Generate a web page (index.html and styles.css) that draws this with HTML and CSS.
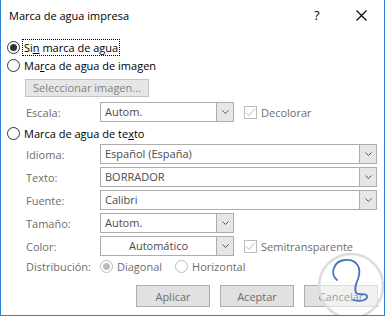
FILE: index.html
```
<!DOCTYPE html>
<html lang="es">
<head>
    <meta charset="UTF-8">
    <title>Marca de agua impresa</title>
    <link rel="stylesheet" href="styles.css">
</head>
<body>
    <div class="dialog">
        <div class="titlebar">
            <span class="title">Marca de agua impresa</span>
            <span class="help">?</span>
            <span class="close">
                <svg width="11" height="11" viewBox="0 0 11 11"><path d="M0.5 0.5 L10.5 10.5 M10.5 0.5 L0.5 10.5" stroke="#000" stroke-width="1.1" fill="none"/></svg>
            </span>
        </div>

        <div class="content">
            <div class="option-row">
                <span class="radio checked"></span>
                <span class="focus-box">Si<u>n</u> marca de agua</span>
            </div>
            <div class="option-row">
                <span class="radio"></span>
                <span class="option-text">Ma<u>r</u>ca de agua de imagen</span>
            </div>

            <div class="sub-button-row">
                <button class="btn btn-picture" disabled>Seleccionar imagen...</button>
            </div>

            <div class="field-row escala-row">
                <span class="label">Escala:</span>
                <div class="combo combo-short">
                    <span class="combo-value">Autom.</span>
                    <span class="combo-arrow"><svg width="7" height="4" viewBox="0 0 7 4"><path d="M0.5 0.5 L3.5 3.5 L6.5 0.5" stroke="#555" fill="none"/></svg></span>
                </div>
                <span class="check"><svg width="11" height="11" viewBox="0 0 11 11"><path d="M1 5.5 L4 8.5 L10 1.5" stroke="#bcbcbc" fill="none"/></svg></span>
                <span class="check-text">Decolorar</span>
            </div>

            <div class="option-row text-option">
                <span class="radio"></span>
                <span class="option-text">Marca de agua de te<u>x</u>to</span>
            </div>

            <div class="field-list">
                <div class="field-row">
                    <span class="label">Idioma:</span>
                    <div class="combo combo-long">
                        <span class="combo-value">Español (España)</span>
                        <span class="combo-arrow"><svg width="7" height="4" viewBox="0 0 7 4"><path d="M0.5 0.5 L3.5 3.5 L6.5 0.5" stroke="#555" fill="none"/></svg></span>
                    </div>
                </div>
                <div class="field-row">
                    <span class="label">Texto:</span>
                    <div class="combo combo-long">
                        <span class="combo-value">BORRADOR</span>
                        <span class="combo-arrow"><svg width="7" height="4" viewBox="0 0 7 4"><path d="M0.5 0.5 L3.5 3.5 L6.5 0.5" stroke="#555" fill="none"/></svg></span>
                    </div>
                </div>
                <div class="field-row">
                    <span class="label">Fuente:</span>
                    <div class="combo combo-long">
                        <span class="combo-value">Calibri</span>
                        <span class="combo-arrow"><svg width="7" height="4" viewBox="0 0 7 4"><path d="M0.5 0.5 L3.5 3.5 L6.5 0.5" stroke="#555" fill="none"/></svg></span>
                    </div>
                </div>
                <div class="field-row">
                    <span class="label">Tamaño:</span>
                    <div class="combo combo-short">
                        <span class="combo-value">Autom.</span>
                        <span class="combo-arrow"><svg width="7" height="4" viewBox="0 0 7 4"><path d="M0.5 0.5 L3.5 3.5 L6.5 0.5" stroke="#555" fill="none"/></svg></span>
                    </div>
                </div>
                <div class="field-row">
                    <span class="label">Color:</span>
                    <div class="combo combo-short">
                        <span class="combo-value centered">Automático</span>
                        <span class="combo-arrow"><svg width="7" height="4" viewBox="0 0 7 4"><path d="M0.5 0.5 L3.5 3.5 L6.5 0.5" stroke="#555" fill="none"/></svg></span>
                    </div>
                    <span class="check"><svg width="11" height="11" viewBox="0 0 11 11"><path d="M1 5.5 L4 8.5 L10 1.5" stroke="#bcbcbc" fill="none"/></svg></span>
                    <span class="check-text">Semitransparente</span>
                </div>
            </div>

            <div class="field-row layout-row">
                <span class="label">Distribución:</span>
                <span class="radio small-radio checked-grey"></span>
                <span class="grey-text">Diagonal</span>
                <span class="radio small-radio horizontal-radio"></span>
                <span class="grey-text">Horizontal</span>
            </div>
        </div>

        <div class="footer">
            <button class="btn btn-action disabled-text">Aplicar</button>
            <button class="btn btn-action disabled-text">Aceptar</button>
            <button class="btn btn-action">Cancelar</button>
        </div>

        <!-- site watermark over the corner -->
        <svg class="watermark" width="70" height="70" viewBox="0 0 70 70">
            <circle cx="34" cy="34" r="32" fill="rgba(255,255,255,0.55)" stroke="#dcdcdc" stroke-width="2.5"/>
            <path d="M20 28 C13 22 16 9 28 8 C40 7 45 16 41 27 C39 32 37 36 39 41 C42 44 49 40 50 44 C51 48 44 50 36 48" stroke="#4a75b9" stroke-width="1.8" fill="none" stroke-linecap="round"/>
        </svg>
    </div>
</body>
</html>
```

FILE: styles.css
```
* {
    box-sizing: border-box;
}

body {
    margin: 0;
    background-color: #ffffff;
    font-family: 'Open Sans', 'Noto Sans', sans-serif;
    font-size: 11px;
    color: #000000;
}

.dialog {
    position: relative;
    width: 385px;
    height: 316px;
    border: 1px solid #2b7fd4;
    border-top: none;
    background-color: #ffffff;
    overflow: hidden;
}

/* --- Title bar --- */
.titlebar {
    display: flex;
    align-items: center;
    height: 30px;
    padding-left: 8px;
}

.title {
    font-size: 11px;
    color: #000;
}

.help {
    margin-left: auto;
    font-size: 13px;
    width: 12px;
}

.close {
    display: flex;
    margin-left: 30px;
    margin-right: 17px;
}

/* --- Content --- */
.content {
    padding-top: 8px;
}

.option-row {
    display: flex;
    align-items: center;
    height: 18px;
    padding-left: 6px;
}

.radio {
    width: 13px;
    height: 13px;
    border: 1px solid #333333;
    border-radius: 50%;
    display: flex;
    align-items: center;
    justify-content: center;
    flex-shrink: 0;
}

.radio.checked::after {
    content: '';
    width: 7px;
    height: 7px;
    border-radius: 50%;
    background-color: #333333;
}

.option-row .option-text {
    margin-left: 4px;
}

.focus-box {
    margin-left: 2px;
    padding: 0 1px;
    border: 1px dotted #000;
    line-height: 15px;
}

.sub-button-row {
    padding-left: 24px;
    margin-top: 5px;
}

.btn {
    font-family: inherit;
    font-size: 11px;
    background-color: #e1e1e1;
    border: 1px solid #adadad;
    color: #1a1a1a;
    padding: 0;
}

.btn-picture {
    width: 124px;
    height: 18px;
    line-height: 14px;
    color: #838383;
    background-color: #e6e6e6;
    border-color: #c4c4c4;
}

.field-row {
    display: flex;
    align-items: center;
    height: 20px;
    padding-left: 25px;
}

.escala-row {
    margin-top: 5px;
}

.label {
    width: 74px;
    color: #6d6d6d;
}

.combo {
    display: flex;
    height: 20px;
    border: 1px solid #adadad;
    background-color: #ffffff;
}

.combo-short {
    width: 134px;
}

.combo-long {
    width: 277px;
}

.combo-value {
    flex: 1;
    padding-left: 4px;
    line-height: 18px;
    color: #4a4a4a;
}

.combo-value.centered {
    text-align: center;
    padding-left: 0;
}

.combo-arrow {
    width: 17px;
    border-left: 1px solid #adadad;
    background-color: #e6e6e6;
    display: flex;
    align-items: center;
    justify-content: center;
}

.check {
    width: 13px;
    height: 13px;
    border: 1px solid #bcbcbc;
    margin-left: 10px;
    display: flex;
    flex-shrink: 0;
}

.check-text {
    margin-left: 4px;
    color: #6d6d6d;
}

.text-option {
    margin-top: 2px;
}

.field-list {
    display: flex;
    flex-direction: column;
    gap: 3px;
    margin-top: 2px;
}

.layout-row {
    height: 18px;
    margin-top: 1px;
}

.small-radio {
    border-color: #bcbcbc;
}

.checked-grey::after {
    content: '';
    width: 7px;
    height: 7px;
    border-radius: 50%;
    background-color: #bcbcbc;
}

.grey-text {
    margin-left: 4px;
    color: #6d6d6d;
}

.horizontal-radio {
    margin-left: 13px;
}

/* --- Footer buttons --- */
.footer {
    display: flex;
    justify-content: flex-end;
    gap: 10px;
    padding-right: 6px;
    margin-top: 10px;
}

.btn-action {
    width: 74px;
    height: 22px;
}

.disabled-text {
    color: #6d6d6d;
}

.watermark {
    position: absolute;
    left: 316px;
    top: 252px;
}
```
